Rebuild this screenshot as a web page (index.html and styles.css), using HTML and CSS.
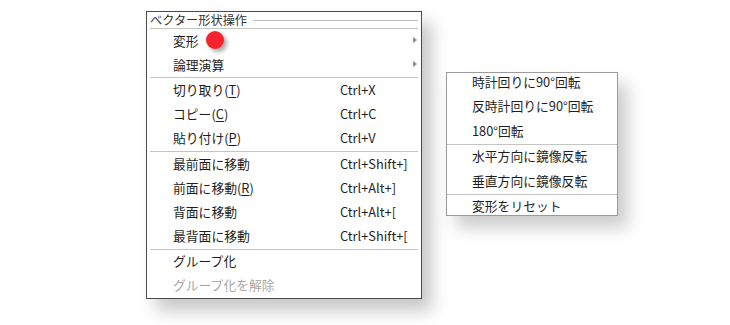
FILE: index.html
```html
<!DOCTYPE html>
<html lang="ja">
<head>
<meta charset="utf-8">
<link rel="stylesheet" href="styles.css">
</head>
<body>
<div class="stage">
  <div class="menu main">
    <div class="title"><span class="title-text">ベクター形状操作</span><span class="title-line"></span></div>
    <div class="sep"></div>
    <div class="item"><span class="label">変形</span><span class="arrow"></span></div>
    <div class="item"><span class="label">論理演算</span><span class="arrow"></span></div>
    <div class="sep"></div>
    <div class="item"><span class="label">切り取り(<u>T</u>)</span><span class="key">Ctrl+X</span></div>
    <div class="item"><span class="label">コピー(<u>C</u>)</span><span class="key">Ctrl+C</span></div>
    <div class="item"><span class="label">貼り付け(<u>P</u>)</span><span class="key">Ctrl+V</span></div>
    <div class="sep"></div>
    <div class="item"><span class="label">最前面に移動</span><span class="key">Ctrl+Shift+]</span></div>
    <div class="item"><span class="label">前面に移動(<u>R</u>)</span><span class="key">Ctrl+Alt+]</span></div>
    <div class="item"><span class="label">背面に移動</span><span class="key">Ctrl+Alt+[</span></div>
    <div class="item"><span class="label">最背面に移動</span><span class="key">Ctrl+Shift+[</span></div>
    <div class="sep"></div>
    <div class="item"><span class="label">グループ化</span></div>
    <div class="item disabled"><span class="label">グループ化を解除</span></div>
  </div>
  <div class="dot"></div>
  <div class="menu sub">
    <div class="item first"><span class="label">時計回りに90°回転</span></div>
    <div class="item"><span class="label">反時計回りに90°回転</span></div>
    <div class="item"><span class="label">180°回転</span></div>
    <div class="sep full"></div>
    <div class="item"><span class="label">水平方向に鏡像反転</span></div>
    <div class="item"><span class="label">垂直方向に鏡像反転</span></div>
    <div class="sep full"></div>
    <div class="item"><span class="label">変形をリセット</span></div>
  </div>
</div>
</body>
</html>
```
FILE: styles.css
```css
html, body {
  margin: 0;
  padding: 0;
  background: #ffffff;
}
body {
  font-family: "Noto Sans CJK JP", "Noto Sans", sans-serif;
  font-size: 12.8px;
  color: #1e1e1e;
}
.stage {
  position: relative;
  width: 730px;
  height: 325px;
  overflow: hidden;
}
.menu {
  position: absolute;
  background: #fff;
  box-sizing: border-box;
  display: flex;
  flex-direction: column;
}
.main {
  left: 146px;
  top: 11px;
  width: 276px;
  height: 288px;
  border: 1px solid #4a4a4a;
  box-shadow: 10px 12px 16px rgba(0,0,0,0.22);
}
.sub {
  left: 446px;
  top: 72px;
  width: 172px;
  height: 144px;
  border: 1px solid #9a9a9a;
  box-shadow: 10px 12px 16px rgba(0,0,0,0.2);
  overflow: hidden;
}
.title {
  height: 16px;
  flex: none;
  display: flex;
  align-items: center;
  padding: 0 3px 0 3px;
  gap: 6px;
  color: #333;
  font-size: 12.2px;
}
.title-text {
  line-height: 15px;
}
.title-line {
  flex: 1;
  height: 1px;
  background: #bcbcbc;
}
.sep {
  height: 1px;
  background: #c4c4c4;
  margin: 0 3px 0 3px;
  flex: none;
}
.sep.full {
  margin: 0;
}
.item {
  height: 24.2px;
  box-sizing: border-box;
  padding-bottom: 2px;
  flex: none;
  display: flex;
  align-items: center;
  padding-left: 26px;
  position: relative;
}
.sub .item {
  height: 24.5px;
  padding-left: 25px;
}
.sub .item.first {
  margin-top: -3px;
}
.label {
  width: 167px;
  white-space: nowrap;
}
.key {
  white-space: nowrap;
}
.item u {
  text-decoration-thickness: 1px;
  text-underline-offset: 2px;
}
.disabled {
  color: #a8a8a8;
}
.arrow {
  position: absolute;
  right: 4px;
  top: 8px;
  width: 0;
  height: 0;
  border-top: 3.5px solid transparent;
  border-bottom: 3.5px solid transparent;
  border-left: 4px solid #8a8a8a;
}
.dot {
  position: absolute;
  left: 206px;
  top: 31px;
  width: 18px;
  height: 18px;
  border-radius: 50%;
  background: #f5232d;
  box-shadow: 3px 3px 4px rgba(0,0,0,0.35);
}
```
